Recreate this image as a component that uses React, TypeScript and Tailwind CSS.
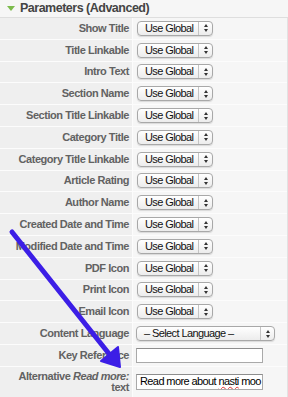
import React from "react";

const selectRows = [
  "Show Title",
  "Title Linkable",
  "Intro Text",
  "Section Name",
  "Section Title Linkable",
  "Category Title",
  "Category Title Linkable",
  "Article Rating",
  "Author Name",
  "Created Date and Time",
  "Modified Date and Time",
  "PDF Icon",
  "Print Icon",
  "Email Icon",
];

function Arrows() {
  return (
    <div className="flex flex-col items-center gap-[2px]">
      <div className="w-0 h-0 border-l-[2.5px] border-r-[2.5px] border-b-[3px] border-l-transparent border-r-transparent border-b-[#333]" />
      <div className="w-0 h-0 border-l-[2.5px] border-r-[2.5px] border-t-[3px] border-l-transparent border-r-transparent border-t-[#333]" />
    </div>
  );
}

function FakeSelect({ text, wide }: { text: string; wide?: boolean }) {
  return (
    <div
      className={`${wide ? "w-[139px]" : "w-[76px]"} h-[15px] flex items-stretch rounded-[4px] border border-[#a8a8a8] bg-gradient-to-b from-white to-[#ececec] shadow-[0_1px_1px_rgba(0,0,0,0.12)]`}
    >
      <div className="flex-1 flex items-center pl-[7px] text-[11px] tracking-[-0.6px] text-[#111] leading-none whitespace-nowrap overflow-hidden">
        {text}
      </div>
      <div className="w-[14px] border-l border-[#c4c4c4] flex items-center justify-center">
        <Arrows />
      </div>
    </div>
  );
}

function Label({ children, tall }: { children: React.ReactNode; tall?: boolean }) {
  return (
    <div
      className={`${tall ? "h-[30px]" : "h-[20.8px]"} bg-[#efefef] flex items-center justify-end pr-[3px] text-right text-[11px] tracking-[-0.45px] font-bold text-[#626262] leading-[11px]`}
    >
      {children}
    </div>
  );
}

function Value({ children, tall }: { children: React.ReactNode; tall?: boolean }) {
  return (
    <div className={`${tall ? "h-[30px]" : "h-[20.8px]"} bg-[#f6f6f6] flex items-center pl-[3px]`}>
      {children}
    </div>
  );
}

export default function App() {
  return (
    <div
      className="relative w-[288px] h-[397px] overflow-hidden bg-[#f6f6f6]"
      style={{ fontFamily: '"Liberation Sans", Arial, sans-serif' }}
    >
      <div className="h-[18px] bg-[#f6f6f6] border-b border-[#dedede] flex items-center">
        <div className="ml-[7px] w-0 h-0 border-l-[4px] border-r-[4px] border-t-[5px] border-l-transparent border-r-transparent border-t-[#7cbb4c]" />
        <div className="ml-[5px] text-[12.5px] tracking-[-0.5px] font-bold text-[#444] leading-none">
          Parameters (Advanced)
        </div>
      </div>
      <div className="grid grid-cols-[132px_1fr] gap-px bg-[#fcfcfc] border-r border-[#e2e2e2]">
        {selectRows.map((r) => (
          <React.Fragment key={r}>
            <Label>{r}</Label>
            <Value>
              <div className="pl-px">
                <FakeSelect text="Use Global" />
              </div>
            </Value>
          </React.Fragment>
        ))}
        <Label>Content Language</Label>
        <Value>
          <FakeSelect text="– Select Language –" wide />
        </Value>
        <Label>Key Reference</Label>
        <Value>
          <div className="w-[127px] h-[15px] bg-white border border-[#a9a9a9] border-t-[#8d8d8d]" />
        </Value>
        <Label tall>
          <span className="block pt-px">
            Alternative <i>Read more:</i>
            <br />
            text
          </span>
        </Label>
        <Value tall>
          <div className="w-[127px] h-[16px] bg-white border border-[#a9a9a9] border-t-[#8d8d8d] flex items-center pl-[3px] overflow-hidden whitespace-nowrap text-[11px] tracking-[-0.6px] text-black leading-none">
            <span className="whitespace-pre">Read more about </span>
            <span className="underline decoration-wavy decoration-[#e03030] decoration-1">nasti</span>
            <span className="whitespace-pre"> moo</span>
          </div>
        </Value>
      </div>
      <svg
        className="absolute left-0 top-0 pointer-events-none"
        width="288"
        height="397"
        viewBox="0 0 288 397"
      >
        <line x1="12" y1="232" x2="110" y2="355" stroke="#3c1ee6" strokeWidth="5" strokeLinecap="round" />
        <polygon points="120,367 101,361 118,347" fill="#3c1ee6" stroke="#3c1ee6" strokeWidth="2" strokeLinejoin="round" />
      </svg>
    </div>
  );
}
